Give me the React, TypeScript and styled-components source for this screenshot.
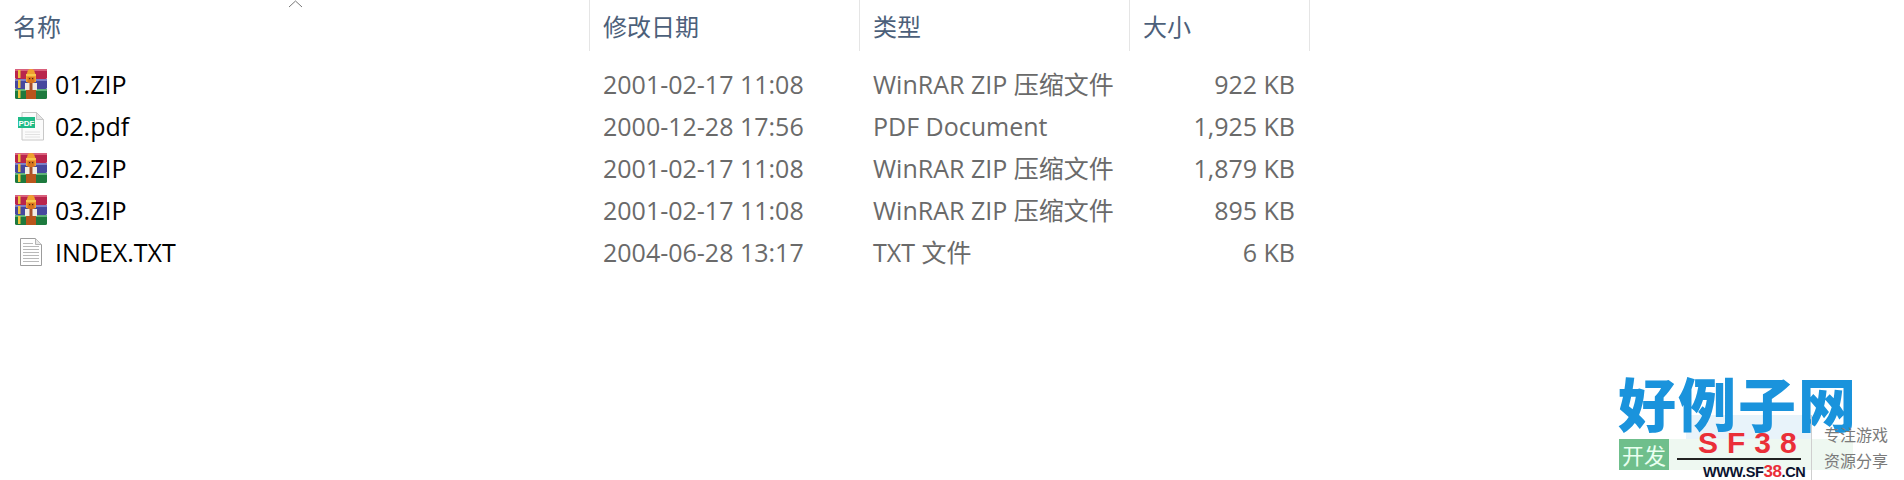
import React from "react";
import styled, { createGlobalStyle } from "styled-components";

const Global = createGlobalStyle`
  html, body { margin: 0; padding: 0; background: #fff; }
  body { font-family: "Open Sans", "Noto Sans CJK SC", sans-serif; }
`;
const CJK = `"Noto Sans", "Noto Sans CJK SC", sans-serif`;

const Page = styled.div`
  position: relative;
  width: 1904px;
  height: 480px;
  overflow: hidden;
  background: #fff;
`;
const Columns = `grid-template-columns: 590px 270px 270px 180px;`;
const Header = styled.div`
  display: grid;
  ${Columns}
  width: 1310px;
  height: 51px;
`;
const HeaderCell = styled.div`
  display: flex;
  align-items: flex-end;
  height: 51px;
  padding: 0 0 12px 13px;
  box-sizing: border-box;
  border-right: 1px solid #e5e5e5;
  color: #4c607a;
  font: 400 24px/1 ${CJK};
`;
const SortArrow = styled.svg`
  position: absolute;
  left: 288px;
  top: 0;
`;
const List = styled.div`
  padding-top: 12px;
  width: 1310px;
`;
const Row = styled.div`
  display: grid;
  ${Columns}
  height: 42px;
  align-items: center;
  font-size: 25px;
  line-height: 42px;
  color: #6a6a6a;
`;
const NameCell = styled.div`
  display: flex;
  align-items: center;
  color: #000;
  padding-left: 15px;
`;
const IconBox = styled.div`
  width: 32px;
  height: 32px;
  margin-right: 8px;
  display: flex;
  align-items: center;
  justify-content: center;
  flex: none;
`;
const TextCell = styled.div`
  padding-left: 13px;
  white-space: nowrap;
`;
const SizeCell = styled.div`
  text-align: right;
  padding-right: 15px;
  white-space: nowrap;
`;

const RarIcon = () => (
  <svg width="32" height="30" viewBox="0 0 32 30">
    <rect x="0" y="0" width="32" height="10" rx="1.5" fill="#b9254c" />
    <rect x="0" y="0" width="32" height="2" fill="#d9607c" />
    <rect x="0" y="10" width="32" height="10" rx="1.5" fill="#46489e" />
    <rect x="0" y="10" width="32" height="2" fill="#7c7fc6" />
    <rect x="0" y="20" width="32" height="10" rx="1.5" fill="#1d7a3e" />
    <rect x="0" y="20" width="32" height="2" fill="#5fb278" />
    <rect x="3" y="1" width="2.5" height="8" fill="#efc33c" />
    <rect x="3" y="11" width="2.5" height="8" fill="#efc33c" />
    <rect x="3" y="21" width="2.5" height="8" fill="#efc33c" />
    <rect x="10" y="14" width="12" height="7" fill="#f1ece4" />
    <path d="M11 7 L13 1 Q16 -1 19 1 L21 7 V13 H11 Z" fill="#f0a030" />
    <rect x="11" y="5" width="10" height="2" fill="#f6c64c" />
    <rect x="12.5" y="8" width="7" height="6" fill="#d9741f" />
    <rect x="14" y="9" width="1.2" height="1.2" fill="#4a2a10" />
    <rect x="17" y="9" width="1.2" height="1.2" fill="#4a2a10" />
    <rect x="11" y="21" width="10" height="9" fill="#b9551c" />
    <rect x="14.5" y="14" width="3" height="7" fill="#a8502a" />
  </svg>
);
const PdfIcon = () => (
  <svg width="28" height="29" viewBox="0 0 28 29">
    <path d="M5 .5 H19.5 L26.5 7.5 V28 H5 Z" fill="#fbfbfb" stroke="#c8c8c8" />
    <path d="M19.5 .5 V7.5 H26.5 Z" fill="#e4e4e4" stroke="#c8c8c8" />
    <path d="M8 20 H23 M8 22.5 H23 M8 25 H23" stroke="#e2e2e2" />
    <rect x="1" y="5" width="17" height="11" fill="#1fbb87" />
    <text x="9.5" y="13.7" textAnchor="middle" fontFamily="Liberation Sans, sans-serif" fontWeight="700" fontSize="8" fill="#fff">PDF</text>
  </svg>
);
const TxtIcon = () => (
  <svg width="22" height="28" viewBox="0 0 22 28">
    <path d="M.5 .5 H15.5 L21.5 6.5 V27.5 H.5 Z" fill="#fff" stroke="#9c9c9c" />
    <path d="M15.5 .5 V6.5 H21.5" fill="#e8e8e8" stroke="#b4b4b4" />
    <path d="M3 5.5 H13 M3 8.5 H19 M3 11.5 H19 M3 14.5 H19 M3 17.5 H19 M3 20.5 H19 M3 23.5 H19" stroke="#b9b9b9" />
  </svg>
);

const Mark = styled.div`
  position: absolute;
  right: 0;
  bottom: 0;
  width: 294px;
  height: 110px;
  display: grid;
  grid-template-columns: 9px 50px 142px 93px;
  grid-template-rows: 45px 13px 11px 31px 10px;
`;
const MarkGlow = styled.div`
  grid-column: 3;
  grid-row: 2 / 4;
  margin: 0 0 0 17px;
  background: #e8f3fa;
`;
const MarkBand = styled.div`
  grid-column: 3 / 5;
  grid-row: 4;
  margin-right: 51px;
  background: #eef8f1;
`;
const MarkTitle = styled.div`
  grid-column: 1 / -1;
  grid-row: 1 / 3;
  padding: 7px 0 0 8px;
  font: 900 58px/50px "Noto Sans CJK SC", sans-serif;
  letter-spacing: 2px;
  color: #1a93dc;
  white-space: nowrap;
`;
const MarkBadge = styled.div`
  grid-column: 2;
  grid-row: 4;
  background: #6fbf8c;
  color: #eafff1;
  font: 400 22px/31px "Noto Sans CJK SC", sans-serif;
  text-align: center;
`;
const MarkStack = styled.div`
  grid-column: 3;
  grid-row: 3 / 6;
  display: flex;
  flex-direction: column;
  padding-left: 8px;
`;
const MarkCode = styled.div`
  margin-left: 21px;
  font: 700 30px/30px "Liberation Sans", sans-serif;
  letter-spacing: 9px;
  color: #ea2f38;
  white-space: nowrap;
`;
const MarkRule = styled.div`
  width: 124px;
  height: 2px;
  flex: none;
  background: #222;
`;
const MarkUrl = styled.div`
  margin: 4px 0 0 26px;
  font: 700 14.5px/16px "Liberation Sans", sans-serif;
  letter-spacing: -0.4px;
  color: #0c1330;
  white-space: nowrap;
`;
const MarkUrlRed = styled.span`
  color: #ea2f38;
  font-size: 17px;
`;
const MarkAside = styled.div`
  grid-column: 4;
  grid-row: 2 / 6;
  border-left: 1px solid #cfcfcf;
  padding: 6px 0 0 12px;
  font: 400 16px/26px "Noto Sans CJK SC", sans-serif;
  color: #7a7a7a;
  white-space: nowrap;
`;

type F = { name: string; icon: "rar" | "pdf" | "txt"; date: string; type: string; size: string };
const files: F[] = [
  { name: "01.ZIP", icon: "rar", date: "2001-02-17 11:08", type: "WinRAR ZIP 压缩文件", size: "922 KB" },
  { name: "02.pdf", icon: "pdf", date: "2000-12-28 17:56", type: "PDF Document", size: "1,925 KB" },
  { name: "02.ZIP", icon: "rar", date: "2001-02-17 11:08", type: "WinRAR ZIP 压缩文件", size: "1,879 KB" },
  { name: "03.ZIP", icon: "rar", date: "2001-02-17 11:08", type: "WinRAR ZIP 压缩文件", size: "895 KB" },
  { name: "INDEX.TXT", icon: "txt", date: "2004-06-28 13:17", type: "TXT 文件", size: "6 KB" },
];
const icons = { rar: <RarIcon />, pdf: <PdfIcon />, txt: <TxtIcon /> };

export default function App() {
  return (
    <Page>
      <Global />
      <SortArrow width="15" height="8" viewBox="0 0 15 8">
        <path d="M1 7 L7.5 1 L14 7" fill="none" stroke="#777" />
      </SortArrow>
      <Header>
        <HeaderCell>名称</HeaderCell>
        <HeaderCell>修改日期</HeaderCell>
        <HeaderCell>类型</HeaderCell>
        <HeaderCell>大小</HeaderCell>
      </Header>
      <List>
        {files.map((f) => (
          <Row key={f.name}>
            <NameCell>
              <IconBox>{icons[f.icon]}</IconBox>
              {f.name}
            </NameCell>
            <TextCell>{f.date}</TextCell>
            <TextCell>{f.type}</TextCell>
            <SizeCell>{f.size}</SizeCell>
          </Row>
        ))}
      </List>
      <Mark>
        <MarkGlow />
        <MarkBand />
        <MarkTitle>好例子网</MarkTitle>
        <MarkBadge>开发</MarkBadge>
        <MarkStack>
          <MarkCode>SF38</MarkCode>
          <MarkRule />
          <MarkUrl>
            WWW.SF<MarkUrlRed>38</MarkUrlRed>.CN
          </MarkUrl>
        </MarkStack>
        <MarkAside>
          专注游戏
          <br />
          资源分享
        </MarkAside>
      </Mark>
    </Page>
  );
}
